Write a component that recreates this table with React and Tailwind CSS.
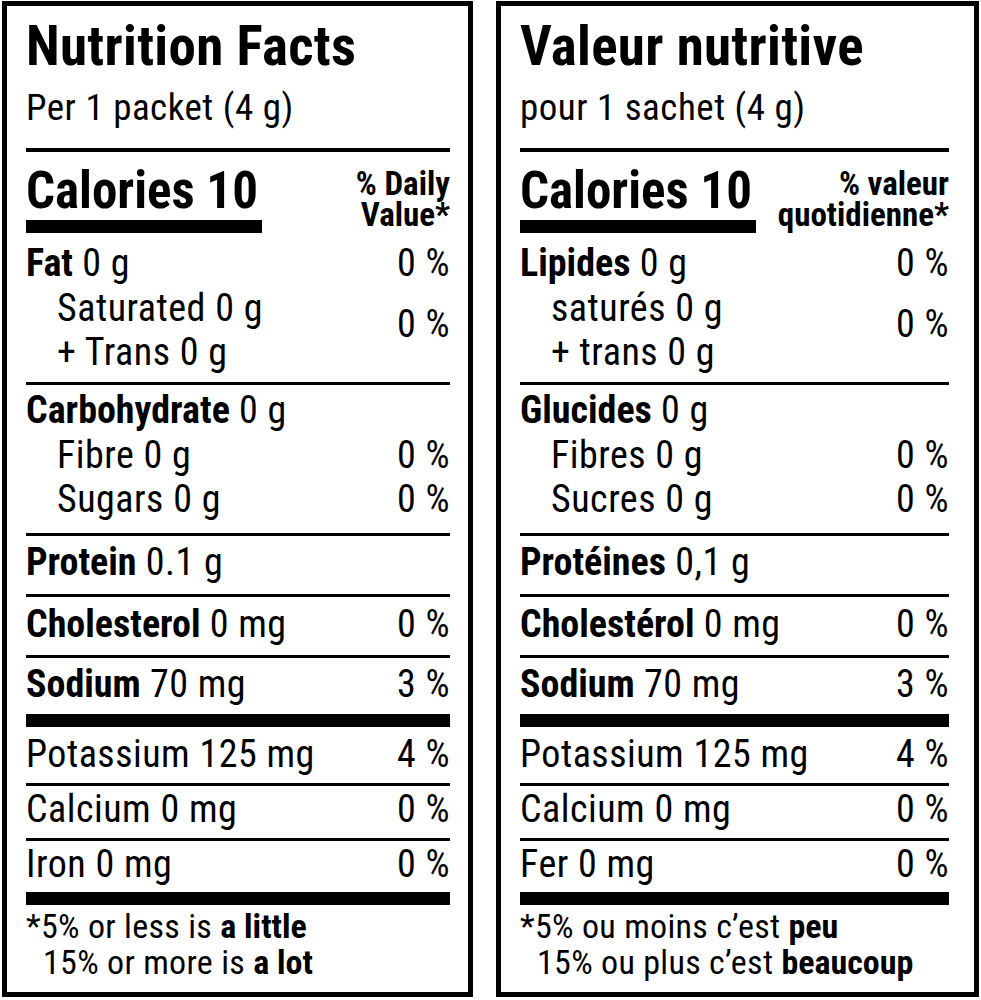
import React from 'react';

const font = "font-['Roboto_Condensed','Roboto','Liberation_Sans',sans-serif]";
const line = 'text-[38px] leading-[44px] tracking-[0.5px]';

const labels = {
    en: {
        title: 'Nutrition Facts',
        serving: 'Per 1 packet (4 g)',
        dv: ['% Daily', 'Value*'],
        fat: ['Fat', '0 g'],
        sat: 'Saturated 0 g',
        trans: '+ Trans 0 g',
        carb: ['Carbohydrate', '0 g'],
        fibre: 'Fibre 0 g',
        sugars: 'Sugars 0 g',
        protein: ['Protein', '0.1 g'],
        chol: ['Cholesterol', '0 mg'],
        sodium: ['Sodium', '70 mg'],
        potassium: 'Potassium 125 mg',
        calcium: 'Calcium 0 mg',
        iron: 'Iron 0 mg',
        note1: ['*5% or less is ', 'a little'],
        note2: ['15% or more is ', 'a lot'],
    },
    fr: {
        title: 'Valeur nutritive',
        serving: 'pour 1 sachet (4 g)',
        dv: ['% valeur', 'quotidienne*'],
        fat: ['Lipides', '0 g'],
        sat: 'saturés 0 g',
        trans: '+ trans 0 g',
        carb: ['Glucides', '0 g'],
        fibre: 'Fibres 0 g',
        sugars: 'Sucres 0 g',
        protein: ['Protéines', '0,1 g'],
        chol: ['Cholestérol', '0 mg'],
        sodium: ['Sodium', '70 mg'],
        potassium: 'Potassium 125 mg',
        calcium: 'Calcium 0 mg',
        iron: 'Fer 0 mg',
        note1: ['*5% ou moins c’est ', 'peu'],
        note2: ['15% ou plus c’est ', 'beaucoup'],
    },
};

const Nutrient = ({ name, amount }) => (
    <span>
        <span className="font-bold tracking-normal">{name}</span> {amount}
    </span>
);

const Row = ({ children, pct, className = '' }) => (
    <div className={`flex justify-between whitespace-nowrap ${line} ${className}`}>
        {children}
        {pct && <span>{pct}</span>}
    </div>
);

const Label = ({ t, width, pr }) => (
    <div className={`${width} h-[996px] shrink-0 border-[5px] border-black bg-white pl-[19px] ${pr} text-black ${font}`}>
        {/* Header */}
        <div className="mt-[12.2px] text-[55px] leading-[56px] font-bold tracking-[0.3px] whitespace-nowrap">{t.title}</div>
        <div className="mt-[13.8px] text-[37px] leading-[40px] tracking-[0.5px] whitespace-nowrap">{t.serving}</div>
        <div className="mt-[20px] h-[4px] bg-black" />

        {/* Calories */}
        <div className="flex justify-between items-start">
            <div className="mt-[13.1px]">
                <div className="text-[51px] leading-[51px] font-bold whitespace-nowrap">Calories 10</div>
                <div className="mt-[3.9px] h-[13px] w-[236px] bg-black" />
            </div>
            <div className="mt-[16.2px] text-right text-[33px] leading-[31px] font-bold whitespace-nowrap">
                <div>{t.dv[0]}</div>
                <div>{t.dv[1]}</div>
            </div>
        </div>

        {/* Fat */}
        <Row className="mt-[8px]" pct="0 %">
            <Nutrient name={t.fat[0]} amount={t.fat[1]} />
        </Row>
        <div className={`mt-[1px] flex justify-between whitespace-nowrap ${line}`}>
            <div className="pl-[31px]">
                <div>{t.sat}</div>
                <div>{t.trans}</div>
            </div>
            <div className="pt-[16px]">0 %</div>
        </div>
        <div className="mt-[8px] h-[3px] bg-black" />

        {/* Carbohydrate */}
        <Row className="mt-[3px]">
            <Nutrient name={t.carb[0]} amount={t.carb[1]} />
        </Row>
        <Row className="mt-[1px] pl-[31px]" pct="0 %">
            <span>{t.fibre}</span>
        </Row>
        <Row className="pl-[31px]" pct="0 %">
            <span>{t.sugars}</span>
        </Row>
        <div className="mt-[12px] h-[3px] bg-black" />

        <Row className="mt-[4px]">
            <Nutrient name={t.protein[0]} amount={t.protein[1]} />
        </Row>
        <div className="mt-[10px] h-[3px] bg-black" />

        <Row className="mt-[5px]" pct="0 %">
            <Nutrient name={t.chol[0]} amount={t.chol[1]} />
        </Row>
        <div className="mt-[9px] h-[3px] bg-black" />

        <Row className="mt-[4px]" pct="3 %">
            <Nutrient name={t.sodium[0]} amount={t.sodium[1]} />
        </Row>
        <div className="mt-[8px] h-[13px] bg-black" />

        {/* Minerals */}
        <Row className="mt-[5px]" pct="4 %">
            <span>{t.potassium}</span>
        </Row>
        <div className="mt-[7px] h-[3px] bg-black" />
        <Row className="mt-[1px]" pct="0 %">
            <span>{t.calcium}</span>
        </Row>
        <div className="mt-[7px] h-[3px] bg-black" />
        <Row className="mt-[1px]" pct="0 %">
            <span>{t.iron}</span>
        </Row>
        <div className="mt-[6px] h-[13px] bg-black" />

        {/* Footnote */}
        <div className="mt-[3.4px] text-[34px] leading-[36px] tracking-[0.3px] whitespace-nowrap">
            <div>
                {t.note1[0]}
                <span className="font-bold tracking-normal">{t.note1[1]}</span>
            </div>
            <div className="pl-[17px]">
                {t.note2[0]}
                <span className="font-bold tracking-normal">{t.note2[1]}</span>
            </div>
        </div>
    </div>
);

export default function App() {
    return (
        <div className="w-[981px] h-[1000px] bg-white pl-[2px] pt-[1px] flex gap-[23px]">
            <Label t={labels.en} width="w-[471px]" pr="pr-[18px]" />
            <Label t={labels.fr} width="w-[483px]" pr="pr-[25px]" />
        </div>
    );
}
